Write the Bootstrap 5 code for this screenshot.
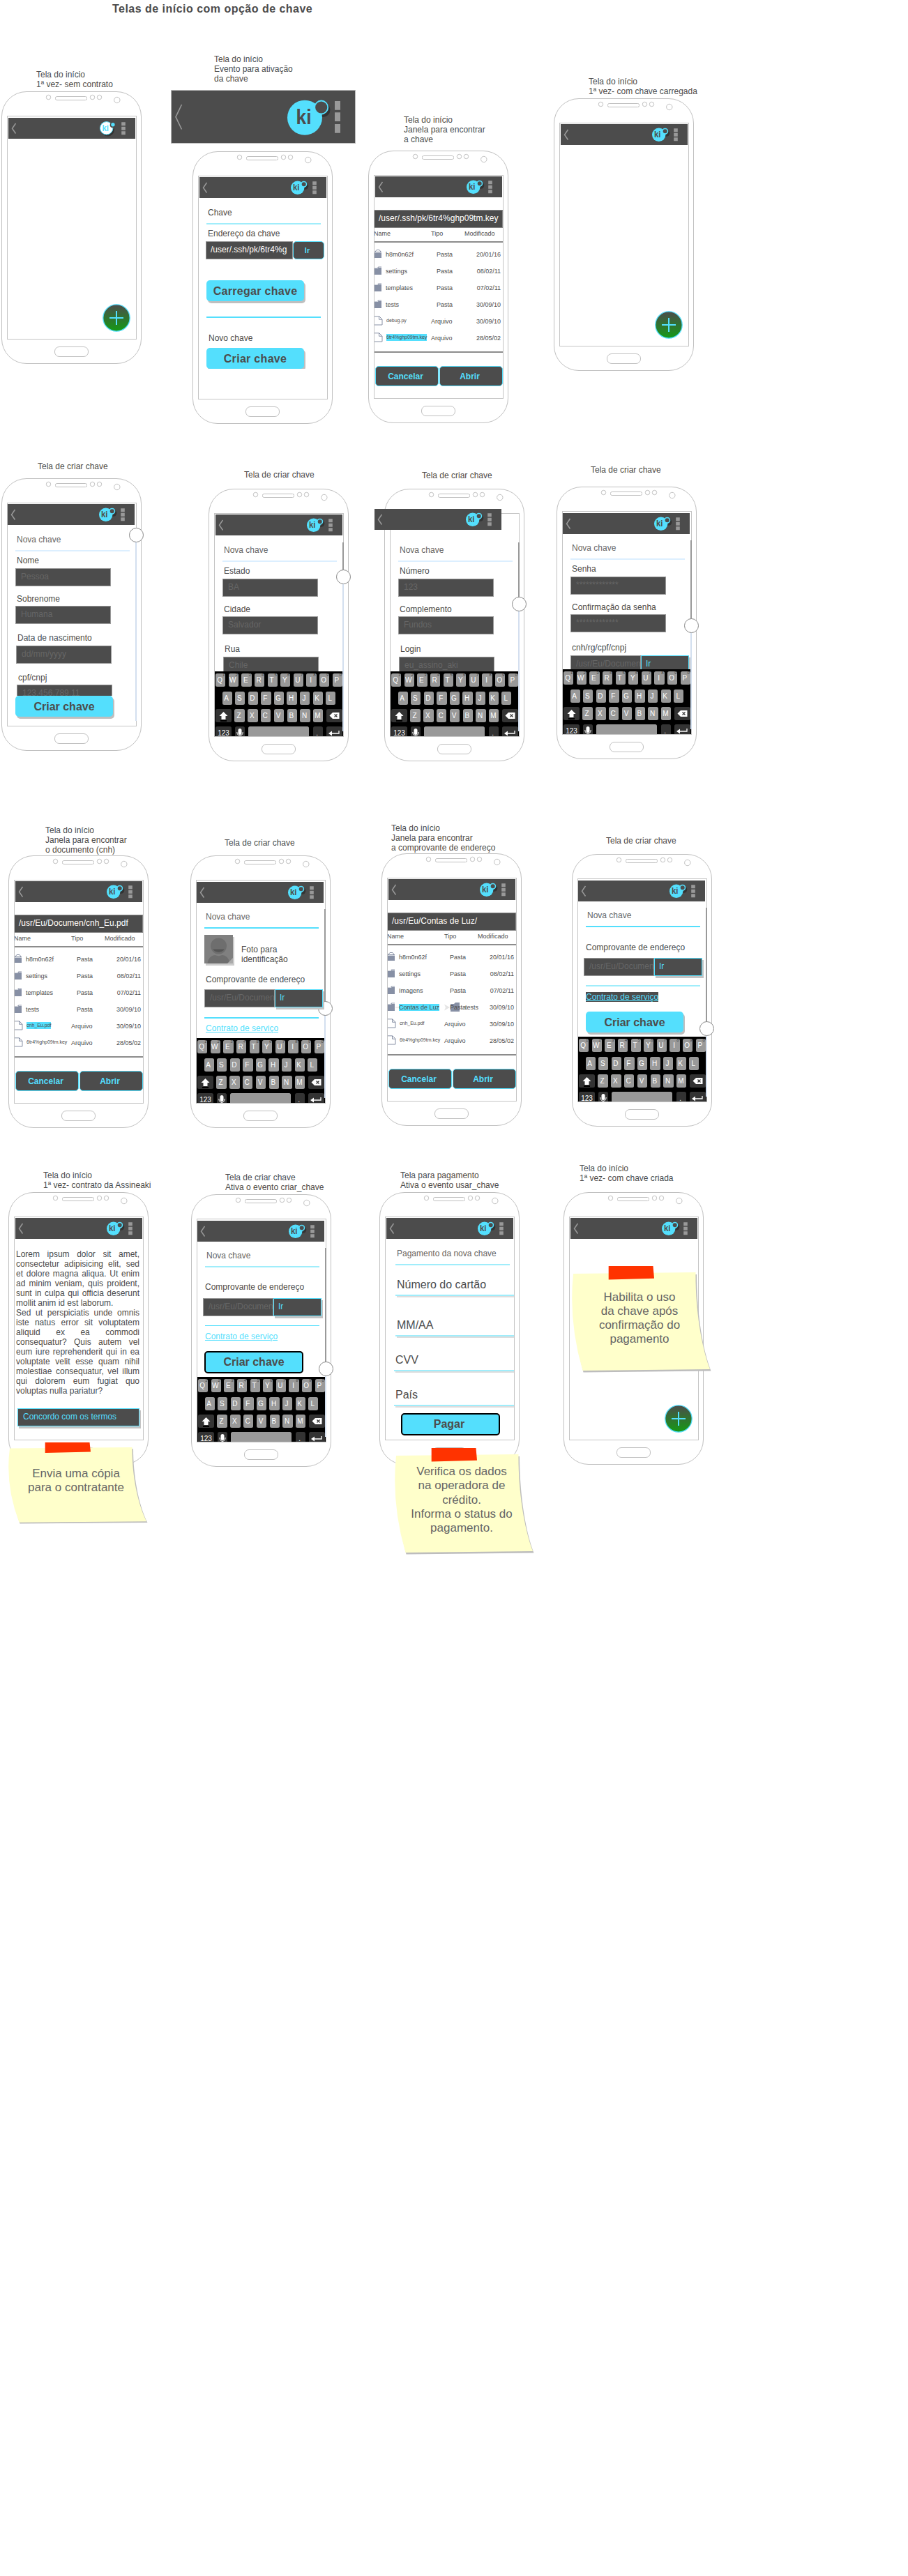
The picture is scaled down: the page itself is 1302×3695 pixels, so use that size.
<!DOCTYPE html>
<html lang="pt-BR">
<head>
<meta charset="utf-8">
<meta name="viewport" content="width=device-width, initial-scale=1">
<title>Telas de início com opção de chave</title>
<link href="https://cdn.jsdelivr.net/npm/bootstrap@5.3.0/dist/css/bootstrap.min.css" rel="stylesheet">
<style>
:root{--ink:#4c4c4c;--cy:#54dffd;--ln:#c4c4c4}
body{font-family:"Liberation Sans",Arial,sans-serif;font-size:12px;line-height:14px;color:var(--ink);background:#fff}
.board{position:relative;width:1302px;height:3695px;overflow:hidden}
.board-title{font-size:16px;line-height:20px;font-weight:700;letter-spacing:.48px;padding:3px 0 0 161px;margin:0}
/* artboards on the free canvas */
.art,.memo,.cap,.bigbar{position:absolute}
.cap{white-space:nowrap}
#c1{left:52px;top:100px}#c2{left:307px;top:78px}#c3{left:579px;top:165px}#c4{left:844px;top:110px}
#c5{left:54px;top:662px}#c6{left:350px;top:674px}#c7{left:605px;top:675px}#c8{left:847px;top:667px}
#c9{left:65px;top:1184px}#c10{left:322px;top:1202px}#c11{left:561px;top:1181px}#c12{left:869px;top:1199px}
#c13{left:62px;top:1679px}#c14{left:323px;top:1682px}#c15{left:574px;top:1679px}#c16{left:831px;top:1669px}
#a1{left:2px;top:131px}#a2{left:276px;top:217px}#a3{left:528px;top:216px}#a4{left:794px;top:141px}
#a5{left:2px;top:686px}#a6{left:299px;top:701px}#a7{left:551px;top:701px}#a8{left:798px;top:698px}
#a9{left:12px;top:1227px}#a10{left:273px;top:1227px}#a11{left:547px;top:1224px}#a12{left:820px;top:1225px}
#a13{left:12px;top:1710px}#a14{left:274px;top:1713px}#a15{left:544px;top:1710px}#a16{left:808px;top:1710px}
#n1{left:12px;top:2069px;--h:117px}#n2{left:566px;top:2077px;--h:153px}#n3{left:820px;top:1816px;--h:153px}
/* device */
.art{width:201px;height:391px;border:1px solid #c0c0c0;border-radius:36px;background:#fff;display:flex;flex-direction:column;padding-left:7px}
.sensors{height:34px;flex:none;margin-left:-7px}
.sensors svg,.appbar svg,.key svg,.memo svg{display:block}
.scr{position:relative;width:186px;height:321px;flex:none;border:1px solid var(--ln);display:flex;flex-direction:column}
.home{width:49px;height:15px;border:1px solid #c0c0c0;border-radius:7px;margin:10px 0 0 68px}
.slot{height:34px;flex:none;padding:1px 0 0 1px}
.appbar{width:182px;height:30px;background:var(--ink)}
.lo{padding-top:2px}.lft{padding-left:0}
.off{margin:-8px 0 0 -24px;position:relative;z-index:1}
.pane{overflow:hidden;padding-left:11px}
.kb-on{height:192px;flex:none}
.flush{padding-left:0}
.fields{height:242px;overflow:hidden}
.t1{margin-top:1px}.t3{margin-top:3px}.t4{margin-top:4px}.t5{margin-top:5px}.t6{margin-top:6px}.t7{margin-top:7px}.t8{margin-top:8px}.t9{margin-top:9px}
.t11{margin-top:11px}.t13{margin-top:13px}.t14{margin-top:14px}.t15{margin-top:15px}.t19{margin-top:19px}.t21{margin-top:21px}.t22{margin-top:22px}.t30{margin-top:30px}
.ttl{color:#666;padding-left:2px}.lbl{padding-left:2px;white-space:nowrap}
.in1{margin-left:1px}.in2{margin-left:2px}
hr.rule{width:164px;height:2px;border:0;opacity:1;background:var(--cy);margin-bottom:0}
hr.soft{background:#dcefff}hr.mid{background:#a0edfb}hr.thin{height:1px}
hr.gray{background:#8c8c8c;width:184px}
.inp{display:block;width:137px;height:26px;background:var(--ink);border:1px solid #999;border-radius:0;padding:0 7px;font-size:12px;line-height:22px;color:#666;white-space:nowrap;overflow:hidden}
.inp.w101{width:101px;padding-right:0}
.inp.key-path{width:125px;color:#fff;line-height:23px;margin-left:-1px;padding:0 6px}
.go{width:69px;height:26px;background:var(--ink);border:1px solid var(--cy);color:var(--cy);padding:0 6px;line-height:22px;position:relative;z-index:1}
.sh{box-shadow:2px 3px 0 #c4c4c4}
.go-b{width:45px;height:26px;border:1px solid var(--cy);border-radius:5px;background:var(--ink);color:var(--cy);font-weight:700;font-size:11px;line-height:24px;padding:0 4px 0 0;text-align:center}
.btn.act{display:block;width:140px;height:30px;background:var(--cy);color:var(--ink);border:0;border-radius:5px;font-size:16px;font-weight:700;line-height:31px;padding:0;box-shadow:2px 3px 0 #bfbfbf}
.btn.act.sp{letter-spacing:.3px}
.btn.act.bold-edge{width:142px;height:32px;border:2px solid #000;box-shadow:none;line-height:26px;margin-left:-1px}
.lnk{color:var(--cy);text-decoration:underline;margin-left:2px;display:inline-block}
.lnk.sel{background:var(--ink);margin-left:0}
.path{height:26px;background:var(--ink);border:1px solid #888;border-left:0;color:#fff;padding-left:6px;line-height:23px;white-space:nowrap}
.fh,.fr{font-size:9px;white-space:nowrap}
.fh span:nth-child(1){width:82px;margin-left:-1px}.fh span:nth-child(2){width:48px}
.fr{height:24px;padding-right:3px}
.fr .ic{width:16px;height:14px;margin-top:-2px;flex:none}
.fr .nm{width:65px}.fr .ty{padding-left:8px}.fr .f{padding-left:0}
.fr .nm.tiny{font-size:7px;padding-left:1px;line-height:10px;margin-top:-2px}
.hit{background:var(--cy);display:inline-block;line-height:10px}
.ghost{position:absolute;left:0;top:4px;font-size:9px}
.two{padding-left:1px;gap:1px}
.btn.dk{width:91px;height:29px;background:var(--ink);color:var(--cy);border:1px solid var(--cy);border-radius:5px;font-size:12px;font-weight:700;padding:0 4px 0 0;line-height:26px}
.photo{width:41px;height:41px;box-shadow:2px 3px 0 #ccc;flex:none}
.fab{width:40px;height:40px;margin:auto 8px 10px auto}
.kb{width:184px;height:93px;background:#000;padding:3px 1px 0;overflow:hidden;color:#fff;flex:none}
.kb .kr{display:flex;justify-content:space-between;height:19px;margin-bottom:7px}
.kb .kr.in{padding:0 9.5px}.kb .kr.c{margin-bottom:6px}
.key{position:relative;width:14.3px;height:19px;flex:none;border-radius:2.5px;background:#999;font-size:10px;line-height:19px;text-align:center;padding-right:2px}
.key sup{position:absolute;right:1px;top:-1px;font-size:6px;line-height:6px;color:#444}
.key.d{background:#333}.key.wide{width:23px;padding:0}.key.space{width:87px}
.track{position:absolute;left:182.5px;top:41px;width:2px;height:271px;background:#d3dfef;z-index:2}
.track i{position:absolute;left:0;top:0;width:2px;background:#999}
.track b{position:absolute;left:-9px;width:21px;height:21px;border:1px solid #888;border-radius:50%;background:#fff}
.k5 b{top:-6px}.k6 b{top:39px}.k6 i{height:40px}.k7 b{top:78px}.k7 i{height:79px}.k8 b{top:112px}.k8 i{height:113px}
.k10{z-index:0}.k10 b{top:132px}.k10 i{height:133px}.k12 b{top:163px}.k12 i{height:164px}
.lorem{width:177px;margin:12px 0 0 2px;text-align:justify}
.lorem p{margin:0}
.agree{width:175px;height:26px;margin:18px 0 0 4px;background:var(--ink);border:1px solid var(--cy);color:var(--cy);padding-left:7px;line-height:22px;box-shadow:2px 3px 0 #c4c4c4}
.addr{margin-left:-3px}
.pay-pane{padding-left:14px;height:285px}
.pay{font-size:16px;line-height:18px;width:172px;border-bottom:2px solid #a0edfb;box-shadow:2px 2px 0 #ddd;padding:0 0 5px 2px}
.pay-a{margin-top:19px}.pay-b{margin-top:33px}.pay-c{margin-top:25px;margin-left:-2px}.pay-d{margin-top:25px;margin-left:-2px}
.btn.act.pagar{margin:10px 0 0 8px;padding-right:4px}
.memo{width:201px;height:var(--h)}
.memo svg{position:absolute;inset:0;width:201px;height:var(--h)}
.memo p{position:relative;margin:0;padding:35px 7px 0 0;font-size:17px;line-height:20px;color:#666;text-align:center}
#n2 p{padding:24px 9px 0 0;line-height:20.3px}
.bigbar{left:245px;top:129px;width:265px;height:77px;background:var(--ink);border:1px solid #bbb}
.bigbar svg{display:block;margin:-1px}
svg text{font-family:"Liberation Sans",Arial,sans-serif;font-weight:700}
</style>
</head>
<body>
<svg width="0" height="0" class="position-absolute" aria-hidden="true">
<defs>
<linearGradient id="gfab" x1="0" y1="0" x2="0" y2="1"><stop offset="0" stop-color="#4c4c4c"/><stop offset="1" stop-color="#159a15"/></linearGradient>
<symbol id="s-dev" viewBox="0 0 200 34"><g fill="none" stroke="#c0c0c0"><circle cx="66.5" cy="7.5" r="3.2"/><rect x="76.5" y="6.5" width="45" height="5" rx="2"/><circle cx="129.5" cy="7.5" r="3.2"/><circle cx="139.5" cy="7.5" r="3.2"/><circle cx="164.8" cy="11.5" r="4.2"/></g></symbol>
<symbol id="s-folder" viewBox="0 0 14 14"><path d="M0 3h4l1.500-1.500H10V13H0z" fill="#8790a5"/><path d="M0 3.500h5l1-1h4" fill="none" stroke="#fff" stroke-width=".6"/></symbol>
<symbol id="s-case" viewBox="0 0 14 14"><path d="M0 4h10v9H0z" fill="#8790a5"/><path d="M1 4l2-2.500h4L9 4M0 5.500h10" fill="none" stroke="#8790a5"/><path d="M0 5.500h10" stroke="#fff" stroke-width=".6"/></symbol>
<symbol id="s-file" viewBox="0 0 14 14"><path d="M0 .8h6.800L11 5v8H0M6.500 1v4.200H11" fill="none" stroke="#8790a5"/></symbol>
<symbol id="s-fab" viewBox="0 0 40 40"><circle cx="20" cy="20" r="19.2" fill="url(#gfab)" stroke="#54dffd" stroke-width="1.3"/><path d="M10 20h20M20 10v20" stroke="#54dffd" stroke-width="2"/></symbol>
<symbol id="s-memo" viewBox="0 0 201 153" preserveAspectRatio="none"><path d="M4 13Q-3 82 16.500 152.500L199.500 150.500C186 115 179 60 179 12Z" fill="#bdbdbd"/><path d="M2 11Q-5 80 15.500 150L198 148C185 113 177 60 177.500 9Z" fill="#ffffcb"/><path d="M52.700 0H116.500L118 17.700 52.700 19.600Z" fill="#ff3300"/></symbol>
</defs>
</svg>

<template id="tpl-bar"><svg width="182" height="30" viewBox="0 0 182 30"><path d="M10.500 8 5.500 15.200 10.500 22.500" fill="none" stroke="#999" stroke-width="1.5"/><circle cx="151.5" cy="13" r="4.8" fill="#333"/><circle cx="140.7" cy="15.3" r="9.7" fill="#54dffd"/><circle cx="149.7" cy="10.3" r="3.8" fill="#4c4c4c" stroke="#54dffd" stroke-width="1.6"/><text x="134" y="18.5" font-size="12" textLength="9.5" lengthAdjust="spacingAndGlyphs" fill="#4c4c4c">ki</text><path d="M162.200 6.300h5.600v5h-5.600zM162.200 12.700h5.600v5h-5.600zM162.200 19.200h5.600v5h-5.600z" fill="#999"/></svg></template>
<template id="tpl-kb">
<div class="kr"><span class="key">Q<sup>1</sup></span><span class="key">W<sup>2</sup></span><span class="key">E<sup>3</sup></span><span class="key">R<sup>4</sup></span><span class="key">T<sup>5</sup></span><span class="key">Y<sup>6</sup></span><span class="key">U<sup>7</sup></span><span class="key">I<sup>8</sup></span><span class="key">O<sup>9</sup></span><span class="key">P<sup>0</sup></span></div>
<div class="kr in c"><span class="key">A</span><span class="key">S</span><span class="key">D</span><span class="key">F</span><span class="key">G</span><span class="key">H</span><span class="key">J</span><span class="key">K</span><span class="key">L</span></div>
<div class="kr c"><span class="key d wide"><svg width="23" height="19"><path d="M11.500 4l6 6h-3v5h-6v-5h-3z" fill="#fff"/><path d="M7 17h9" stroke="#000" stroke-width="2"/></svg></span><span class="key">Z</span><span class="key">X</span><span class="key">C</span><span class="key">V</span><span class="key">B</span><span class="key">N</span><span class="key">M</span><span class="key d wide"><svg width="23" height="19"><path d="M4.500 9.500 9 5h9.500v9H9z" fill="#fff"/><path d="M11.500 7.500l4 4m0-4l-4 4" stroke="#333" stroke-width="1.2"/></svg></span></div>
<div class="kr"><span class="key d wide">123</span><span class="key d"><svg width="14" height="19"><rect x="4.5" y="3" width="5" height="9" rx="2.5" fill="#fff"/><path d="M2.800 8c0 7 8.400 7 8.400 0M7 13v3" fill="none" stroke="#fff"/></svg></span><span class="key space"></span><span class="key d">.</span><span class="key d wide"><svg width="23" height="19"><path d="M18 6v4H6" fill="none" stroke="#fff" stroke-width="1.3"/><path d="M3 10l5-3.500v7z" fill="#fff"/></svg></span></div>
</template>

<main class="board">
<h1 class="board-title">Telas de início com opção de chave</h1>

<!-- Linha 1 -->
<div class="cap" id="c1">Tela do início<br>1ª vez- sem contrato</div>
<section class="art" id="a1"><div class="scr"><div class="slot lo"><div class="appbar"><svg width="182" height="30" viewBox="0 0 182 30"><path d="M10.500 8 5.500 15.200 10.500 22.500" fill="none" stroke="#999" stroke-width="1.5"/><circle cx="142.5" cy="17" r="9.5" fill="#333"/><circle cx="140.7" cy="14.8" r="9.2" fill="#fff" stroke="#54dffd"/><circle cx="149.7" cy="10.3" r="4" fill="#4c4c4c"/><circle cx="149.9" cy="9.8" r="2.7" fill="#54dffd"/><text x="134.5" y="18.5" font-size="12" textLength="9.5" lengthAdjust="spacingAndGlyphs" fill="#54dffd">ki</text><path d="M162.200 6.300h5.600v5h-5.600zM162.200 12.700h5.600v5h-5.600zM162.200 19.200h5.600v5h-5.600z" fill="#999"/></svg></div></div><svg class="fab"><use href="#s-fab"/></svg></div></section>

<div class="cap" id="c2">Tela do início<br>Evento para ativação<br>da chave</div>
<div class="bigbar"><svg width="265" height="77" viewBox="0 0 265 77"><path d="M15.500 21 7 38.700 15.500 56.500" fill="none" stroke="#999" stroke-width="1.6"/><circle cx="218" cy="28.5" r="10.5" fill="#333"/><circle cx="192" cy="39.7" r="25" fill="#54dffd"/><circle cx="215.7" cy="25" r="9.5" fill="#4c4c4c" stroke="#54dffd" stroke-width="1.8"/><text x="179.5" y="49" font-size="30" textLength="22" lengthAdjust="spacingAndGlyphs" fill="#4c4c4c">ki</text><path d="M235 16h8v12.700h-8zM235 32.300h8V45h-8zM235 49h8v12.700h-8z" fill="#999"/></svg></div>
<section class="art" id="a2"><div class="scr"><div class="slot"><div class="appbar" data-part="bar"></div></div>
<div class="pane"><div class="lbl t11">Chave</div><hr class="rule mid t8"><div class="lbl t6">Endereço da chave</div>
<div class="d-flex t4"><div class="inp key-path">/user/.ssh/pk/6tr4%g</div><div class="go-b">Ir</div></div>
<button class="btn act sp t30">Carregar chave</button><hr class="rule t22"><div class="lbl in1 t22">Novo chave</div><button class="btn act sp t7">Criar chave</button></div></div></section>

<div class="cap" id="c3">Tela do início<br>Janela para encontrar<br>a chave</div>
<section class="art" id="a3"><div class="scr"><div class="slot"><div class="appbar" data-part="bar"></div></div>
<div class="pane flush"><div class="path t15">/user/.ssh/pk/6tr4%ghp09tm.key</div>
<div class="fh d-flex t1"><span>Name</span><span>Tipo</span><span>Modificado</span></div><hr class="rule gray t4">
<div class="t5">
<div class="fr d-flex align-items-center"><svg class="ic"><use href="#s-case" width="14" height="14"/></svg><span class="nm">h8m0n62f</span><span class="ty">Pasta</span><span class="ms-auto">20/01/16</span></div>
<div class="fr d-flex align-items-center"><svg class="ic"><use href="#s-folder" width="14" height="14"/></svg><span class="nm">settings</span><span class="ty">Pasta</span><span class="ms-auto">08/02/11</span></div>
<div class="fr d-flex align-items-center"><svg class="ic"><use href="#s-folder" width="14" height="14"/></svg><span class="nm">templates</span><span class="ty">Pasta</span><span class="ms-auto">07/02/11</span></div>
<div class="fr d-flex align-items-center"><svg class="ic"><use href="#s-folder" width="14" height="14"/></svg><span class="nm">tests</span><span class="ty">Pasta</span><span class="ms-auto">30/09/10</span></div>
<div class="fr d-flex align-items-center"><svg class="ic"><use href="#s-file" width="14" height="14"/></svg><span class="nm tiny">debug.py</span><span class="ty f">Arquivo</span><span class="ms-auto">30/09/10</span></div>
<div class="fr d-flex align-items-center"><svg class="ic"><use href="#s-file" width="14" height="14"/></svg><span class="nm tiny"><span class="hit">6tr4%ghp09tm.key</span></span><span class="ty f">Arquivo</span><span class="ms-auto">28/05/02</span></div>
</div><hr class="rule gray t7"><div class="two d-flex t19"><button class="btn dk">Cancelar</button><button class="btn dk">Abrir</button></div></div></div></section>

<div class="cap" id="c4">Tela do início<br>1ª vez- com chave carregada</div>
<section class="art" id="a4"><div class="scr"><div class="slot"><div class="appbar" data-part="bar"></div></div><svg class="fab"><use href="#s-fab"/></svg></div></section>

<!-- Linha 2 -->
<div class="cap" id="c5">Tela de criar chave</div>
<section class="art" id="a5"><div class="scr"><div class="track k5"><b></b></div><div class="slot lft"><div class="appbar" data-part="bar"></div></div>
<div class="pane pb-2"><div class="fields"><div class="ttl t11">Nova chave</div><hr class="rule soft t8"><div class="lbl t6">Nome</div><div class="inp t4">Pessoa</div><div class="lbl t11">Sobrenome</div><div class="inp t3">Humana</div><div class="lbl in1 t13">Data de nascimento</div><div class="inp in1 t4">dd/mm/yyyy</div><div class="lbl in2 t13">cpf/cnpj</div><div class="inp in2 t3">123.456.789.11</div></div><button class="btn act">Criar chave</button></div></div></section>

<div class="cap" id="c6">Tela de criar chave</div>
<section class="art" id="a6"><div class="scr"><div class="track k6"><i></i><b></b></div><div class="slot"><div class="appbar" data-part="bar"></div></div>
<div class="pane kb-on"><div class="ttl t11">Nova chave</div><hr class="rule soft t8"><div class="lbl t6">Estado</div><div class="inp t4">BA</div><div class="lbl t11">Cidade</div><div class="inp t3">Salvador</div><div class="lbl in1 t14">Rua</div><div class="inp in1 t4">Chile</div></div><div class="kb" data-part="kb"></div></div></section>

<div class="cap" id="c7">Tela de criar chave</div>
<section class="art" id="a7"><div class="scr"><div class="track k7"><i></i><b></b></div><div class="slot"><div class="appbar off" data-part="bar"></div></div>
<div class="pane kb-on"><div class="ttl t11">Nova chave</div><hr class="rule soft t8"><div class="lbl t6">Número</div><div class="inp t4">123</div><div class="lbl t11">Complemento</div><div class="inp t3">Fundos</div><div class="lbl in1 t14">Login</div><div class="inp in1 t4">eu_assino_aki</div></div><div class="kb" data-part="kb"></div></div></section>

<div class="cap" id="c8">Tela de criar chave</div>
<section class="art" id="a8"><div class="scr"><div class="track k8"><i></i><b></b></div><div class="slot lo lft"><div class="appbar" data-part="bar"></div></div>
<div class="pane kb-on"><div class="ttl t11">Nova chave</div><hr class="rule soft t8"><div class="lbl t6">Senha</div><div class="inp t4">*************</div><div class="lbl t11">Confirmação da senha</div><div class="inp t3">*************</div><div class="lbl t15">cnh/rg/cpf/cnpj</div><div class="d-flex t4"><div class="inp w101">/usr/Eu/Documen</div><div class="go sh">Ir</div></div></div><div class="kb" data-part="kb"></div></div></section>

<!-- Linha 3 -->
<div class="cap" id="c9">Tela do início<br>Janela para encontrar<br>o documento (cnh)</div>
<section class="art" id="a9"><div class="scr"><div class="slot"><div class="appbar" data-part="bar"></div></div>
<div class="pane flush"><div class="path t15">/usr/Eu/Documen/cnh_Eu.pdf</div>
<div class="fh d-flex t1"><span>Name</span><span>Tipo</span><span>Modificado</span></div><hr class="rule gray t4">
<div class="t5">
<div class="fr d-flex align-items-center"><svg class="ic"><use href="#s-case" width="14" height="14"/></svg><span class="nm">h8m0n62f</span><span class="ty">Pasta</span><span class="ms-auto">20/01/16</span></div>
<div class="fr d-flex align-items-center"><svg class="ic"><use href="#s-folder" width="14" height="14"/></svg><span class="nm">settings</span><span class="ty">Pasta</span><span class="ms-auto">08/02/11</span></div>
<div class="fr d-flex align-items-center"><svg class="ic"><use href="#s-folder" width="14" height="14"/></svg><span class="nm">templates</span><span class="ty">Pasta</span><span class="ms-auto">07/02/11</span></div>
<div class="fr d-flex align-items-center"><svg class="ic"><use href="#s-folder" width="14" height="14"/></svg><span class="nm">tests</span><span class="ty">Pasta</span><span class="ms-auto">30/09/10</span></div>
<div class="fr d-flex align-items-center"><svg class="ic"><use href="#s-file" width="14" height="14"/></svg><span class="nm tiny"><span class="hit">cnh_Eu.pdf</span></span><span class="ty f">Arquivo</span><span class="ms-auto">30/09/10</span></div>
<div class="fr d-flex align-items-center"><svg class="ic"><use href="#s-file" width="14" height="14"/></svg><span class="nm tiny">6tr4%ghp09tm.key</span><span class="ty f">Arquivo</span><span class="ms-auto">28/05/02</span></div>
</div><hr class="rule gray t7"><div class="two d-flex t19"><button class="btn dk">Cancelar</button><button class="btn dk">Abrir</button></div></div></div></section>

<div class="cap" id="c10">Tela de criar chave</div>
<section class="art" id="a10"><div class="scr"><div class="track k10"><i></i><b></b></div><div class="slot lo lft"><div class="appbar" data-part="bar"></div></div>
<div class="pane kb-on"><div class="ttl t11">Nova chave</div><hr class="rule t8">
<div class="d-flex t9"><svg class="photo" viewBox="0 0 41 41"><path d="M0 0h41v41H0z" fill="#808080"/><circle cx="20.5" cy="16" r="11.5" fill="#6e6e6e"/><path d="M12.500 20.500h16c-2 5.500-14 5.500-16 0z" fill="#555"/><path d="M4.500 41c1-8 6-12 11-12 3 1.500 7 1.500 10 0 5 0 10 4 11 12z" fill="#6e6e6e"/><path d="M41 33v8h-8z" fill="#aaa"/></svg><div class="ms-2 ps-1 t14">Foto para<br>identificação</div></div>
<div class="lbl t15">Comprovante de endereço</div><div class="d-flex t7"><div class="inp w101">/usr/Eu/Documen</div><div class="go sh">Ir</div></div><hr class="rule t14"><a class="lnk t7">Contrato de serviço</a></div><div class="kb" data-part="kb"></div></div></section>

<div class="cap" id="c11">Tela do início<br>Janela para encontrar<br>a comprovante de endereço</div>
<section class="art" id="a11"><div class="scr"><div class="slot"><div class="appbar" data-part="bar"></div></div>
<div class="pane flush"><div class="path t15">/usr/Eu/Contas de Luz/</div>
<div class="fh d-flex t1"><span>Name</span><span>Tipo</span><span>Modificado</span></div><hr class="rule gray t4">
<div class="t5">
<div class="fr d-flex align-items-center"><svg class="ic"><use href="#s-case" width="14" height="14"/></svg><span class="nm">h8m0n62f</span><span class="ty">Pasta</span><span class="ms-auto">20/01/16</span></div>
<div class="fr d-flex align-items-center"><svg class="ic"><use href="#s-folder" width="14" height="14"/></svg><span class="nm">settings</span><span class="ty">Pasta</span><span class="ms-auto">08/02/11</span></div>
<div class="fr d-flex align-items-center"><svg class="ic"><use href="#s-folder" width="14" height="14"/></svg><span class="nm">Imagens</span><span class="ty">Pasta</span><span class="ms-auto">07/02/11</span></div>
<div class="fr d-flex align-items-center position-relative"><svg class="ghost" width="130" height="16"><path d="M11 8h62" stroke="#eee" stroke-width="2"/><path d="M81 3.500l8 4.500-8 4.500 2-4.500z" fill="#e4e4e4"/><path d="M90 3h5l2-2h6v13H90z" fill="#8790a5"/><text x="111" y="11.2" font-size="9" fill="#4c4c4c" class="fw-normal">tests</text></svg><svg class="ic"><use href="#s-folder" width="14" height="14"/></svg><span class="nm position-relative"><span class="hit">Contas de Luz</span></span><span class="ty position-relative">Pasta</span><span class="ms-auto">30/09/10</span></div>
<div class="fr d-flex align-items-center"><svg class="ic"><use href="#s-file" width="14" height="14"/></svg><span class="nm tiny">cnh_Eu.pdf</span><span class="ty f">Arquivo</span><span class="ms-auto">30/09/10</span></div>
<div class="fr d-flex align-items-center"><svg class="ic"><use href="#s-file" width="14" height="14"/></svg><span class="nm tiny">6tr4%ghp09tm.key</span><span class="ty f">Arquivo</span><span class="ms-auto">28/05/02</span></div>
</div><hr class="rule gray t7"><div class="two d-flex t19"><button class="btn dk">Cancelar</button><button class="btn dk">Abrir</button></div></div></div></section>

<div class="cap" id="c12">Tela de criar chave</div>
<section class="art" id="a12"><div class="scr"><div class="track k12"><i></i><b></b></div><div class="slot lo lft"><div class="appbar" data-part="bar"></div></div>
<div class="pane kb-on"><div class="ttl t11">Nova chave</div><hr class="rule t8"><div class="t22">Comprovante de endereço</div><div class="d-flex t8 addr"><div class="inp w101">/usr/Eu/Documen</div><div class="go sh">Ir</div></div><hr class="rule mid t13"><a class="lnk sel t8">Contrato de serviço</a><button class="btn act t14">Criar chave</button></div><div class="kb" data-part="kb"></div></div></section>

<!-- Linha 4 -->
<div class="cap" id="c13">Tela do início<br>1ª vez- contrato da Assineaki</div>
<section class="art" id="a13"><div class="scr"><div class="slot"><div class="appbar" data-part="bar"></div></div>
<div class="lorem"><p>Lorem ipsum dolor sit amet, consectetur adipisicing elit, sed et dolore magna aliqua. Ut enim ad minim veniam, quis proident, sunt in culpa qui officia deserunt mollit anim id est laborum.</p><p>Sed ut perspiciatis unde omnis iste natus error sit voluptatem aliquid ex ea commodi consequatur? Quis autem vel eum iure reprehenderit qui in ea voluptate velit esse quam nihil molestiae consequatur, vel illum qui dolorem eum fugiat quo voluptas nulla pariatur?</p></div><div class="agree">Concordo com os termos</div></div></section>

<div class="cap" id="c14">Tela de criar chave<br>Ativa o evento criar_chave</div>
<section class="art" id="a14"><div class="scr"><div class="track k12"><i></i><b></b></div><div class="slot lo lft"><div class="appbar" data-part="bar"></div></div>
<div class="pane kb-on"><div class="ttl t11">Nova chave</div><hr class="rule mid t8"><div class="t21">Comprovante de endereço</div><div class="d-flex t9 addr"><div class="inp w101">/usr/Eu/Documen</div><div class="go sh">Ir</div></div><hr class="rule thin t13"><a class="lnk ms-0 t8">Contrato de serviço</a><button class="btn act bold-edge t14">Criar chave</button></div><div class="kb" data-part="kb"></div></div></section>

<div class="cap" id="c15">Tela para pagamento<br>Ativa o evento usar_chave</div>
<section class="art" id="a15"><div class="scr"><div class="slot"><div class="appbar" data-part="bar"></div></div>
<div class="pane pay-pane"><div class="ttl t11">Pagamento da nova chave</div><hr class="rule mid t8"><div class="pay pay-a">Número do cartão</div><div class="pay pay-b">MM/AA</div><div class="pay pay-c">CVV</div><div class="pay pay-d">País</div><button class="btn act bold-edge pagar">Pagar</button></div></div></section>

<div class="cap" id="c16">Tela do início<br>1ª vez- com chave criada</div>
<section class="art" id="a16"><div class="scr"><div class="slot"><div class="appbar" data-part="bar"></div></div><svg class="fab"><use href="#s-fab"/></svg></div></section>

<aside class="memo" id="n1"><svg viewBox="0 0 201 153" preserveAspectRatio="none"><use href="#s-memo" width="201" height="153"/></svg><p>Envia uma cópia<br>para o contratante</p></aside>
<aside class="memo" id="n2"><svg viewBox="0 0 201 153" preserveAspectRatio="none"><use href="#s-memo" width="201" height="153"/></svg><p>Verifica os dados<br>na operadora de<br>crédito.<br>Informa o status do<br>pagamento.</p></aside>
<aside class="memo" id="n3"><svg viewBox="0 0 201 153" preserveAspectRatio="none"><use href="#s-memo" width="201" height="153"/></svg><p>Habilita o uso<br>da chave após<br>confirmação do<br>pagamento</p></aside>
</main>

<script src="https://cdn.jsdelivr.net/npm/bootstrap@5.3.0/dist/js/bootstrap.bundle.min.js"></script>
<script>
// Fill the repeated parts: app bar, keyboard, sensors and home button
document.querySelectorAll('[data-part]').forEach(function (el) {
  el.appendChild(document.getElementById('tpl-' + el.dataset.part).content.cloneNode(true));
});
document.querySelectorAll('.art').forEach(function (el) {
  el.insertAdjacentHTML('afterbegin', '<div class="sensors"><svg width="200" height="34"><use href="#s-dev"/></svg></div>');
  el.insertAdjacentHTML('beforeend', '<div class="home"></div>');
});
</script>
</body>
</html>
